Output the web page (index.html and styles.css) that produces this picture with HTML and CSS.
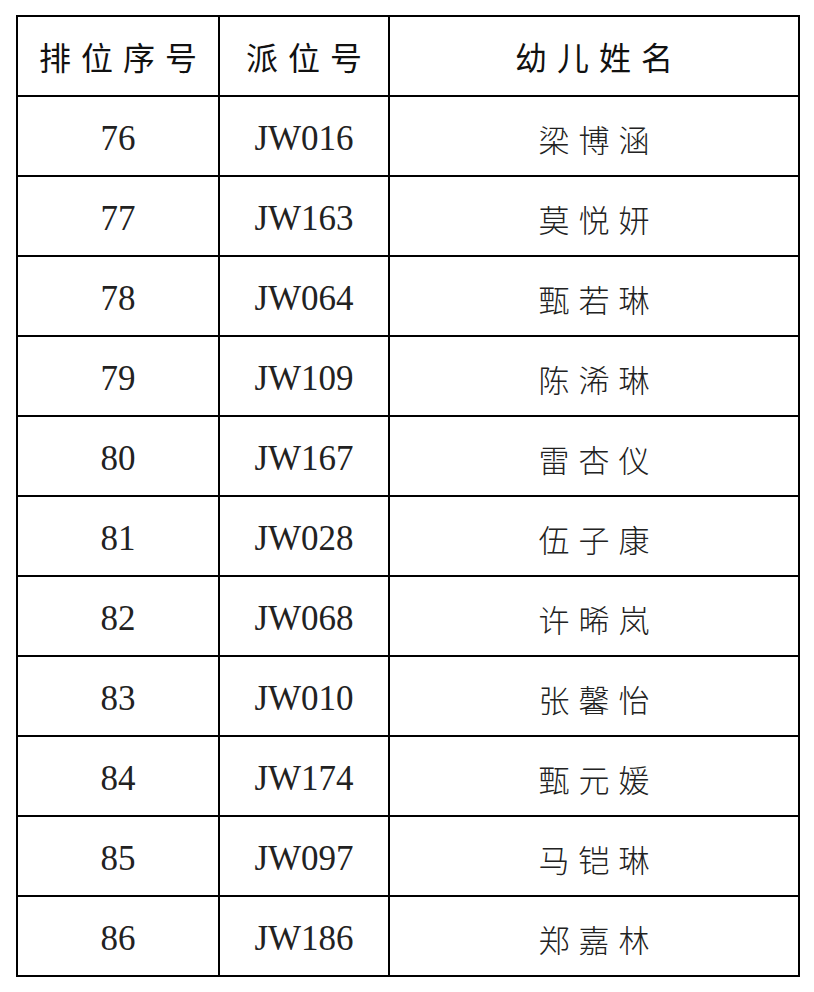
FILE: index.html
```html
<!DOCTYPE html>
<html lang="zh">
<head>
<meta charset="utf-8">
<link rel="stylesheet" href="styles.css">
</head>
<body>
<table class="roster">
  <colgroup>
    <col class="c1"><col class="c2"><col class="c3">
  </colgroup>
  <thead>
    <tr><th>排位序号</th><th>派位号</th><th>幼儿姓名</th></tr>
  </thead>
  <tbody>
    <tr><td class="num">76</td><td class="num">JW016</td><td class="name">梁博涵</td></tr>
    <tr><td class="num">77</td><td class="num">JW163</td><td class="name">莫悦妍</td></tr>
    <tr><td class="num">78</td><td class="num">JW064</td><td class="name">甄若琳</td></tr>
    <tr><td class="num">79</td><td class="num">JW109</td><td class="name">陈浠琳</td></tr>
    <tr><td class="num">80</td><td class="num">JW167</td><td class="name">雷杏仪</td></tr>
    <tr><td class="num">81</td><td class="num">JW028</td><td class="name">伍子康</td></tr>
    <tr><td class="num">82</td><td class="num">JW068</td><td class="name">许晞岚</td></tr>
    <tr><td class="num">83</td><td class="num">JW010</td><td class="name">张馨怡</td></tr>
    <tr><td class="num">84</td><td class="num">JW174</td><td class="name">甄元媛</td></tr>
    <tr><td class="num">85</td><td class="num">JW097</td><td class="name">马铠琳</td></tr>
    <tr><td class="num">86</td><td class="num">JW186</td><td class="name">郑嘉林</td></tr>
  </tbody>
</table>
</body>
</html>
```
FILE: styles.css
```css
html, body {
  margin: 0;
  padding: 0;
  background: #ffffff;
}
body {
  padding: 15px 0 0 16px;
}
.roster {
  border-collapse: collapse;
  table-layout: fixed;
  width: 782px;
  color: #111;
}
.c1 { width: 202px; }
.c2 { width: 170px; }
.c3 { width: 410px; }
.roster th,
.roster td {
  border: 2px solid #000;
  height: 78px;
  padding: 0;
  text-align: center;
  vertical-align: middle;
  white-space: nowrap;
  line-height: 1;
}
.roster tbody td {
  height: 74px;
  padding-top: 4px;
}
.roster th {
  font-family: "Noto Sans CJK SC", sans-serif;
  font-weight: 400;
  font-size: 32px;
  letter-spacing: 10px;
  text-indent: 10px;
}
.roster td.num {
  font-family: "Times New Roman", "Liberation Serif", serif;
  font-size: 35px;
  letter-spacing: 0;
  color: #222;
}
.roster td.name {
  font-family: "Noto Sans CJK SC", sans-serif;
  font-weight: 300;
  font-size: 31px;
  letter-spacing: 9px;
  text-indent: 9px;
  color: #222;
}
```
